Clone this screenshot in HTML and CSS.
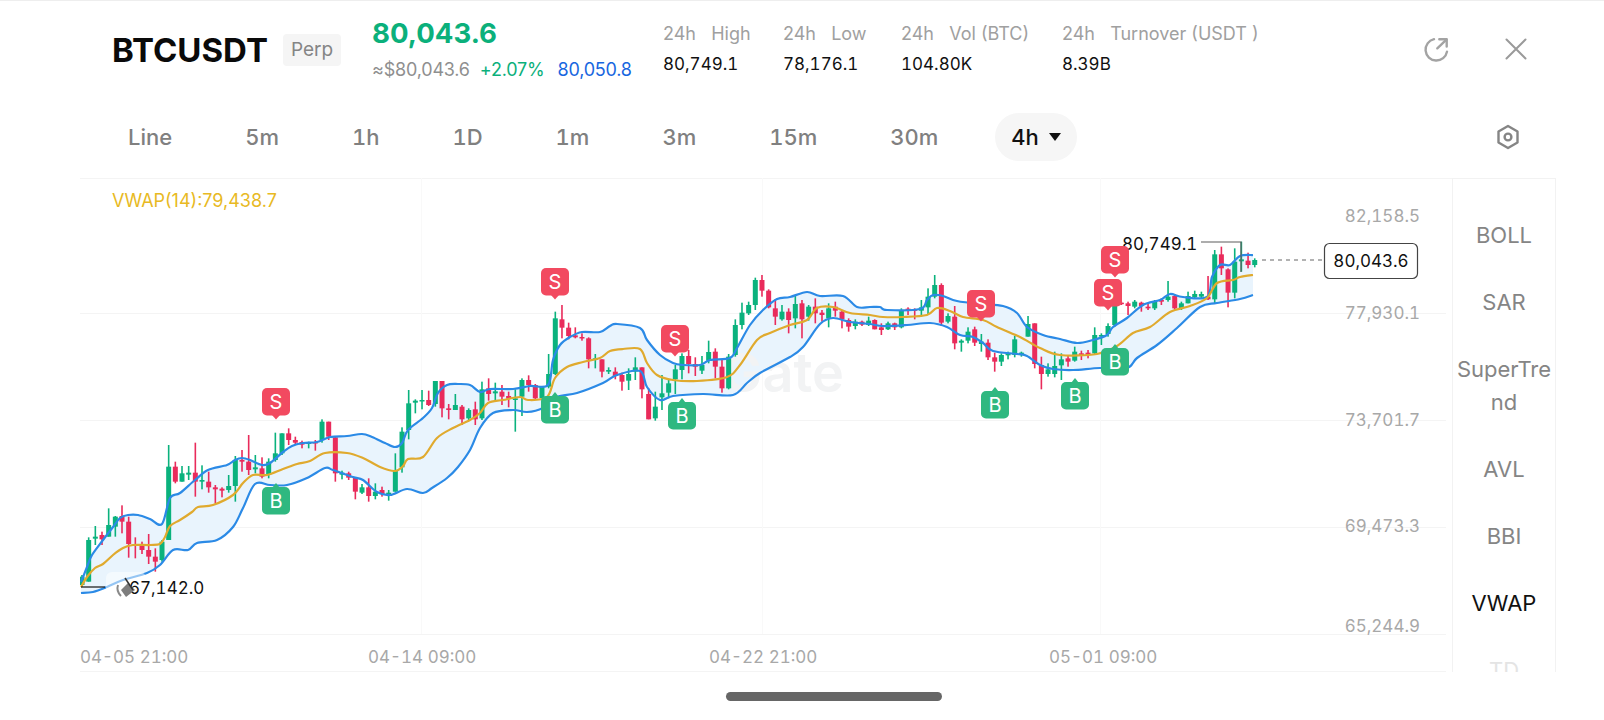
FILE: index.html
```html
<!DOCTYPE html>
<html lang="en">
<head>
    <meta charset="UTF-8">
    <meta name="viewport" content="width=device-width, initial-scale=1.0">
    <title>BTCUSDT</title>
    <link rel="stylesheet" href="styles.css">
</head>
<body>

    <header class="ticker">
        <div class="symbol">
            <h1>BTCUSDT</h1>
            <span class="tag">Perp</span>
        </div>
        <div class="price">
            <div class="price-main">80,043.6</div>
            <div class="price-sub">
                <span class="fiat">≈$80,043.6</span>
                <span class="change">+2.07%</span>
                <span class="mark">80,050.8</span>
            </div>
        </div>
        <div class="stats">
            <div class="stat stat-high">
                <div class="stat-label">24h&nbsp;&nbsp; High</div>
                <div class="stat-value">80,749.1</div>
            </div>
            <div class="stat stat-low">
                <div class="stat-label">24h&nbsp;&nbsp; Low</div>
                <div class="stat-value">78,176.1</div>
            </div>
            <div class="stat stat-vol">
                <div class="stat-label">24h&nbsp;&nbsp; Vol (BTC)</div>
                <div class="stat-value">104.80K</div>
            </div>
            <div class="stat">
                <div class="stat-label">24h&nbsp;&nbsp; Turnover (USDT )</div>
                <div class="stat-value">8.39B</div>
            </div>
        </div>
        <div class="actions">
            <svg class="icon" width="28" height="28" viewBox="0 0 28 28" fill="none" stroke="#a3a3a3" stroke-width="2.4" stroke-linecap="round" stroke-linejoin="round">
                <path d="M12 4.2A10.8 10.8 0 1 0 25 16.6"/>
                <path d="M17.3 4.3H24.7V11.6"/>
                <path d="M24.4 4.6L15.3 13.3"/>
            </svg>
            <svg class="icon" width="22" height="22" viewBox="0 0 22 22" fill="none" stroke="#9a9a9a" stroke-width="2" stroke-linecap="round">
                <path d="M1.5 1.5L20.5 20.5M20.5 1.5L1.5 20.5"/>
            </svg>
        </div>
    </header>

    <nav class="tabs">
        <a class="tab">Line</a>
        <a class="tab">5m</a>
        <a class="tab">1h</a>
        <a class="tab">1D</a>
        <a class="tab">1m</a>
        <a class="tab">3m</a>
        <a class="tab">15m</a>
        <a class="tab">30m</a>
        <a class="tab tab-active">4h <span class="caret"></span></a>
        <svg class="settings" width="24" height="28" viewBox="0 0 24 28" fill="none" stroke="#858585" stroke-width="2.4" stroke-linejoin="round">
            <path d="M12 3L21.5 8.5V19.5L12 25L2.5 19.5V8.5Z"/>
            <circle cx="12" cy="14" r="3.4"/>
        </svg>
    </nav>

    <section class="chart-wrap">
        <svg class="chart" id="chart" width="1372" height="494" viewBox="80 178 1372 494">
            <g class="grid">
                <path d="M80 178.5H1452M80 313.5H1446M80 420.5H1446M80 527.5H1446M80 634.5H1446M80 671.5H1446"/>
                <path class="grid-v" d="M421.5 178V634M762.5 178V634M1100.5 178V634"/>
            </g>

            <path id="band-fill" class="band-fill"/>
            <text class="watermark" x="722" y="392">Gate</text>
            <g id="candles"></g>
            <path id="band-upper" class="band-line"/>
            <path id="band-lower" class="band-line"/>
            <path id="band-mid" class="mid-line"/>

            <!-- low marker -->
            <rect x="106" y="572" width="40" height="36" rx="6" class="low-box"/>
            <path d="M81 587H105" class="low-line"/>
            <text class="px-label" x="129" y="594">67,142.0</text>
            <path d="M121 590L128 583L135 590L126 597Z" class="speaker"/>
            <path d="M118 585Q116 591 121 596" class="speaker-wave"/>
            <path d="M125 578L133 590" class="speaker-edge"/>

            <!-- high marker -->
            <path d="M1201 242H1241V272" class="high-line"/>
            <text class="px-label" x="1122" y="249.5">80,749.1</text>

            <!-- last price -->
            <path d="M1262 260H1324" class="last-line"/>
            <rect x="1324.5" y="243.5" width="93" height="35" rx="5" class="last-box"/>
            <text class="px-label last-text" x="1371" y="267">80,043.6</text>

            <g id="marks"></g>

            <text class="vwap-label" x="112" y="206.5">VWAP(14):79,438.7</text>

            <g class="price-axis">
                <text x="1420" y="222">82,158.5</text>
                <text x="1420" y="319">77,930.1</text>
                <text x="1420" y="426">73,701.7</text>
                <text x="1420" y="532">69,473.3</text>
                <text x="1420" y="632">65,244.9</text>
            </g>
            <g class="time-axis">
                <text x="80" y="663">04-05 21:00</text>
                <text x="368" y="663">04-14 09:00</text>
                <text x="709" y="663">04-22 21:00</text>
                <text x="1049" y="663">05-01 09:00</text>
            </g>
        </svg>

        <aside class="indicators">
            <div class="indicator">BOLL</div>
            <div class="indicator">SAR</div>
            <div class="indicator">SuperTrend</div>
            <div class="indicator">AVL</div>
            <div class="indicator">BBI</div>
            <div class="indicator indicator-active">VWAP</div>
            <div class="indicator indicator-faded">TD</div>
        </aside>
    </section>

    <div class="home-bar"></div>

    <script src="chart.js"></script>
</body>
</html>
```

FILE: styles.css
```css
* {
    box-sizing: border-box;
}

body {
    font-family: Inter, "Liberation Sans", sans-serif;
    background-color: #fff;
    margin: 0;
    width: 1604px;
    height: 720px;
    overflow: hidden;
    color: #111;
    border-top: 1px solid #eee;
}

.ticker {
    display: flex;
    height: 112px;
    padding: 12px 77px 0 112px;
}

.symbol {
    display: flex;
    align-items: center;
    gap: 15px;
    width: 260px;
    height: 74px;
}

.symbol h1 {
    margin: 0;
    font-size: 33px;
    font-weight: 700;
    color: #0a0a0a;
}

.tag {
    padding: 4px 8px;
    height: 32px;
    font-size: 19px;
    line-height: 24px;
    color: #858585;
    background-color: #f5f5f5;
    border-radius: 4px;
}

.price {
    width: 291px;
    padding-top: 1px;
}

.price-main {
    font-size: 27.6px;
    line-height: 38px;
    font-weight: 700;
    color: #0bb07b;
}

.price-sub {
    display: flex;
    gap: 10px;
    margin-top: 7px;
    font-size: 18px;
    line-height: 22px;
    letter-spacing: -0.2px;
}

.fiat {
    color: #8f8f8f;
}

.change {
    color: #0bb07b;
}

.mark {
    color: #1766e0;
    margin-left: 3px;
}

.stats {
    display: flex;
    flex: 1;
    padding-top: 10px;
}

.stat {
    margin-right: 20px;
}

.stat-high {
    width: 100px;
}

.stat-low {
    width: 98px;
}

.stat-vol {
    width: 141px;
}

.stat-label {
    font-size: 18px;
    line-height: 22px;
    color: #a0a0a0;
    white-space: nowrap;
}

.stat-value {
    margin-top: 8px;
    font-size: 17px;
    line-height: 22px;
    font-variant-numeric: tabular-nums;
    color: #111;
}

.actions {
    display: flex;
    align-items: center;
    gap: 55px;
    height: 72px;
}

.tabs {
    display: flex;
    align-items: center;
    gap: 73px;
    height: 48px;
    padding-left: 128px;
    padding-right: 84px;
}

.tab {
    font-size: 22px;
    font-weight: 500;
    font-variant-numeric: tabular-nums;
    color: #808080;
}

.tab-active {
    position: relative;
    display: flex;
    align-items: center;
    gap: 10px;
    height: 48px;
    margin-left: -16px;
    padding: 0 16px;
    color: #111;
    background-color: #f6f6f6;
    border-radius: 24px;
}

.caret {
    width: 0;
    height: 0;
    border-left: 6px solid transparent;
    border-right: 6px solid transparent;
    border-top: 8px solid #111;
}

.settings {
    margin-left: auto;
}

.chart-wrap {
    display: flex;
    height: 494px;
    margin-top: 17px;
    margin-left: 80px;
}

.chart {
    display: block;
    flex-shrink: 0;
}

.grid path {
    fill: none;
    stroke: #f4f4f4;
    stroke-width: 1;
}

.grid .grid-v {
    stroke: #f9f9f9;
}

.watermark {
    font-size: 54px;
    font-weight: 600;
    fill: #f2f3f4;
}

.band-fill {
    fill: #e9f4fd;
}

.band-line {
    fill: none;
    stroke: #2b8ae6;
    stroke-width: 2.2;
    stroke-linejoin: round;
}

.mid-line {
    fill: none;
    stroke: #e0aa2e;
    stroke-width: 2.2;
    stroke-linejoin: round;
}

.low-box {
    fill: rgba(255, 255, 255, 0.5);
}

.low-line {
    stroke: #111;
    stroke-width: 1.2;
}

.speaker {
    fill: #7d7d7d;
}

.speaker-wave {
    fill: none;
    stroke: #8a8a8a;
    stroke-width: 2;
}

.speaker-edge {
    stroke: #333;
    stroke-width: 1.5;
}

.high-line {
    fill: none;
    stroke: #5c5c5c;
    stroke-width: 1.2;
}

.last-line {
    stroke: #666;
    stroke-width: 1.2;
    stroke-dasharray: 4 4;
}

.last-box {
    fill: #fff;
    stroke: #444;
    stroke-width: 1.2;
}

.px-label {
    font-size: 17px;
    font-variant-numeric: tabular-nums;
    fill: #111;
}

.last-text {
    text-anchor: middle;
}

.vwap-label {
    font-size: 18px;
    fill: #e8b923;
}

.price-axis text {
    font-size: 17px;
    font-variant-numeric: tabular-nums;
    fill: #a8a8a8;
    text-anchor: end;
}

.time-axis text {
    font-size: 17px;
    font-variant-numeric: tabular-nums;
    fill: #a8a8a8;
}

.mark-sell {
    fill: #f24a60;
}

.mark-buy {
    fill: #2fb880;
}

.mark-text {
    font-size: 20px;
    fill: #fff;
    text-anchor: middle;
}

.indicators {
    width: 104px;
    height: 494px;
    overflow: hidden;
    border: 1px solid #f2f2f2;
    border-bottom: none;
    padding-top: 40px;
}

.indicator {
    padding: 0 2px;
    margin-bottom: 34px;
    font-size: 22px;
    line-height: 33px;
    text-align: center;
    word-break: break-all;
    color: #858585;
}

.indicator-active {
    color: #111;
}

.indicator-faded {
    color: #e4e4e4;
}

.home-bar {
    width: 216px;
    height: 9px;
    margin: 20px 0 0 726px;
    background-color: #666;
    border-radius: 5px;
}
```

FILE: chart.js
```js
const SVG_NS = 'http://www.w3.org/2000/svg';
const STEP = 6.667;
const g = 1;
const r = 0;

// [high, bodyTop, bodyBottom, low, colour], y in thirds of a px from the base
const candleRuns = [
    { x: 82, base: 380, rows: [
        [585,590,615,620,g],[472,480,605,605,g],[438,470,476,495,g],[455,465,478,495,r],
        [385,435,470,470,g],[408,410,440,470,g],[376,408,425,460,r],[410,425,492,533,r],
        [472,492,498,535,r],[485,497,510,522,r],[462,510,530,552,r],[505,530,545,575,r],
        [480,485,540,545,g],[195,260,480,480,g],[245,260,305,310,r],[258,280,305,305,g],
        [258,278,284,300,g],[188,278,305,350,r],[256,300,305,328,g],[275,305,322,338,r],
        [315,322,328,370,r],[322,326,332,352,r],[285,318,330,338,g],[228,240,318,365,g],
        [210,240,245,275,r],[165,245,270,285,r],[225,262,268,280,g],[232,265,290,295,r],
        [235,245,285,295,g],[158,220,240,245,g],[160,160,220,225,g],[145,160,180,195,r],
        [170,180,188,195,r],[182,186,194,205,r],[185,186,192,205,g],[180,186,190,212,r],
        [118,125,180,188,g],[125,125,170,180,r],[170,172,280,305,r],[272,278,284,298,g],
        [275,280,293,300,r],[293,293,335,358,r],[312,322,338,342,g],[295,322,348,365,r],
        [310,335,348,358,g],[320,330,342,350,r],[330,338,345,362,g],[220,270,335,335,g],
        [142,155,262,278,g],[30,70,150,178,g],[58,62,68,100,g],[30,60,64,88,g],
        [32,60,75,78,r],[3,3,72,80,g],[3,3,85,112,r],[72,85,90,118,r],
        [42,75,90,90,g],[75,80,118,135,r],[85,90,115,122,g]
    ] },
    { x: 475.3, base: 250, rows: [
        [455,478,508,525,r],[395,418,505,510,g],[385,415,432,452,r],[398,424,430,450,g],
        [405,425,440,465,r],[425,438,446,472,r],[418,445,450,545,g],[385,390,440,498,g],
        [376,390,405,425,r],[402,405,445,448,r],[410,410,445,448,g],[312,372,410,415,g],
        [185,205,372,375,g],[165,208,233,265,r],[218,233,258,268,r],[232,256,262,265,r],
        [250,261,265,272,r],[262,265,328,355,r],[312,325,330,355,g],[328,328,365,382,r],
        [352,360,365,372,g],[352,365,378,388,r],[368,375,395,422,r],[355,372,392,420,g],
        [322,352,365,390,g],[352,352,418,445,r],[415,432,508,508,r],[425,470,505,512,g],
        [375,430,442,480,g],[390,400,428,445,g],[345,358,388,432,g],[310,318,360,388,g],
        [300,318,342,370,r],[322,342,350,378,r],[318,345,362,372,g],[272,306,332,340,g],
        [295,305,350,385,r],[330,350,415,428,r],[312,320,415,418,g],[208,225,315,320,g],
        [158,188,225,238,g],[155,165,190,195,g],[83,90,165,180,g],[75,90,122,140,r],
        [118,122,172,175,r],[148,175,200,225,r],[165,185,208,212,g],[175,185,210,250,r],
        [135,162,205,235,g],[150,160,208,265,r],[165,170,200,212,g],[145,170,190,220,r],
        [180,188,195,215,r],[160,175,205,232,g],[155,170,182,200,r],[180,185,208,235,r],
        [205,210,230,245,r],[208,215,228,238,g],[212,215,224,228,r],[200,212,225,228,g]
    ] },
    { x: 874.7, base: 220, rows: [
        [298,300,328,328,r],[310,322,330,345,r],[305,310,328,330,g],[308,310,322,330,r],
        [265,270,322,325,g],[262,266,272,285,r],[265,268,272,298,r],[240,262,272,290,g],
        [205,230,262,285,g],[165,195,230,235,g],[190,195,308,318,r],[280,288,305,310,g],
        [258,290,370,388,r],[358,362,368,395,g],[322,335,362,370,g],[320,328,368,378,r],
        [342,365,372,395,g],[358,368,412,420,r],[398,412,425,455,r],[400,405,425,438,g],
        [395,400,406,418,g],[348,358,405,412,g],[395,398,404,410,g],[288,312,350,350,g],
        [310,310,432,445,r],[410,435,462,508,r],[430,448,462,470,g],[395,438,462,472,g],
        [400,418,436,480,g],[405,415,425,440,r],[380,395,422,425,g],[392,400,408,420,r],
        [390,398,405,415,r],[322,345,400,405,g],[340,345,350,375,g],[310,318,342,350,g],
        [180,235,315,320,g],[245,248,252,255,r],[245,250,258,285,r],[240,245,260,265,g],
        [245,248,258,275,r],[250,260,265,270,r],[240,245,265,270,g],[235,240,245,255,r],
        [183,230,240,245,g],[222,228,265,270,r],[245,250,265,270,g],[215,228,250,250,g],
        [212,222,232,235,g],[215,222,230,235,g],[168,230,238,240,r],[90,103,238,250,g],
        [80,103,145,165,r],[145,148,218,262,r],[85,125,218,235,g],[65,118,124,155,g],
        [98,122,135,145,r],[115,120,135,142,g]
    ] }
];

const upper = [[81,582],[87,567],[92,555],[103,540],[113,527],[120,518],[128,515],[138,515],[150,519],[162,524],
    [170,498],[180,493],[195,480],[208,470],[227,465],[235,460],[242,458],[250,460],[262,465],[270,463],
    [283,452],[292,446],[303,443],[317,442],[330,437],[347,436],[362,434],[372,437],[385,443],[395,447],
    [402,443],[408,430],[423,418],[432,408],[438,393],[447,385],[458,384],[470,385],[480,392],[490,389],
    [513,389],[530,386],[548,385],[553,360],[560,345],[570,337],[582,332],[600,332],[610,326],[617,324],
    [640,328],[647,340],[660,355],[673,363],[683,365],[700,365],[710,360],[730,358],[737,348],[750,325],
    [763,310],[777,299],[790,297],[807,292],[820,296],[843,296],[857,307],[870,307],[880,307],[887,310],
    [920,309],[927,300],[933,295],[943,296],[957,301],[980,304],[1003,306],[1017,313],[1027,327],[1043,335],
    [1060,339],[1077,343],[1093,340],[1107,335],[1113,327],[1127,318],[1143,305],[1160,300],[1170,294],[1183,297],
    [1207,297],[1212,277],[1220,265],[1230,265],[1240,256],[1253,255]];

const mid = [[81,587],[87,577],[95,568],[103,564],[113,555],[123,548],[133,545],[150,545],[160,544],[165,537],
    [170,526],[180,520],[192,512],[198,507],[213,505],[233,495],[243,483],[253,475],[267,475],[283,469],
    [297,464],[310,461],[325,453],[347,453],[363,458],[380,467],[395,471],[403,466],[408,459],[423,457],
    [437,438],[453,428],[470,420],[480,413],[488,403],[503,400],[520,397],[528,400],[547,397],[555,378],
    [567,367],[583,362],[600,358],[610,351],[623,349],[640,349],[647,363],[657,375],[673,380],[697,381],
    [727,377],[740,365],[757,340],[770,333],[790,325],[807,320],[817,308],[833,307],[850,313],[870,315],
    [883,317],[903,317],[927,315],[937,308],[950,311],[963,317],[983,320],[997,327],[1020,337],[1040,348],
    [1060,355],[1097,354],[1117,346],[1133,333],[1150,327],[1170,312],[1190,306],[1207,298],[1217,283],[1233,280],
    [1240,277],[1253,275]];

const lower = [[81,593],[93,592],[107,587],[123,580],[147,573],[160,565],[173,550],[188,550],[197,543],[217,540],
    [233,527],[243,508],[255,484],[270,485],[287,485],[307,478],[325,468],[333,470],[353,477],[363,480],
    [377,492],[390,495],[407,489],[423,493],[432,488],[447,478],[458,467],[470,450],[480,428],[493,413],
    [513,410],[527,412],[543,408],[557,397],[577,393],[603,383],[617,375],[640,371],[647,387],[660,400],
    [673,396],[703,394],[733,395],[747,383],[760,373],[790,357],[803,347],[820,324],[833,318],[850,322],
    [870,324],[883,326],[907,325],[930,323],[947,327],[960,335],[973,337],[983,343],[993,351],[1017,354],
    [1027,356],[1040,365],[1053,369],[1073,370],[1100,368],[1127,368],[1137,358],[1157,345],[1177,328],[1200,307],
    [1217,303],[1240,299],[1253,295]];

// buy/sell badges: left, top of the 28px square
const marks = [
    ['S',262,388],['B',262,487],['S',541,268],['B',541,396],['S',661,325],['B',668,402],
    ['S',967,290],['B',981,391],['B',1061,382],['B',1101,348],['S',1101,246],['S',1094,279]
];

function el(name, attrs, parent) {
    const node = document.createElementNS(SVG_NS, name);
    for (const key in attrs) {
        node.setAttribute(key, attrs[key]);
    }
    parent.appendChild(node);
    return node;
}

// smooth a list of points with a catmull-rom curve
function curve(points) {
    let d = '';
    for (let i = 0; i < points.length - 1; i++) {
        const p0 = points[Math.max(i - 1, 0)];
        const p1 = points[i];
        const p2 = points[i + 1];
        const p3 = points[Math.min(i + 2, points.length - 1)];
        const c1x = p1[0] + (p2[0] - p0[0]) / 6;
        const c1y = p1[1] + (p2[1] - p0[1]) / 6;
        const c2x = p2[0] - (p3[0] - p1[0]) / 6;
        const c2y = p2[1] - (p3[1] - p1[1]) / 6;
        d += `C${c1x.toFixed(1)} ${c1y.toFixed(1)} ${c2x.toFixed(1)} ${c2y.toFixed(1)} ${p2[0]} ${p2[1]}`;
    }
    return d;
}

function drawCandles() {
    const group = document.getElementById('candles');
    for (const run of candleRuns) {
        run.rows.forEach((row, i) => {
            const x = run.x + i * STEP;
            const y = v => run.base + v / 3;
            const colour = row[4] === g ? '#0ab27d' : '#e92b5b';
            el('rect', { x: x - 0.8, y: y(row[0]), width: 1.6, height: (row[3] - row[0]) / 3, fill: colour }, group);
            el('rect', { x: x - 2.5, y: y(row[1]), width: 5, height: Math.max((row[2] - row[1]) / 3, 1.5), fill: colour }, group);
        });
    }
}

function drawBands() {
    const start = p => `M${p[0]} ${p[1]}`;
    const lowerBack = lower.slice().reverse();
    document.getElementById('band-fill').setAttribute('d',
        start(upper[0]) + curve(upper) + 'L' + lowerBack[0].join(' ') + curve(lowerBack) + 'Z');
    document.getElementById('band-upper').setAttribute('d', start(upper[0]) + curve(upper));
    document.getElementById('band-lower').setAttribute('d', start(lower[0]) + curve(lower));
    document.getElementById('band-mid').setAttribute('d', start(mid[0]) + curve(mid));
}

function drawMarks() {
    const group = document.getElementById('marks');
    for (const [label, x, y] of marks) {
        const sell = label === 'S';
        const tipY = sell ? y + 31.5 : y - 4;
        const baseY = sell ? y + 27 : y + 1;
        el('rect', { x: x, y: y, width: 28, height: 27.5, rx: 5, class: sell ? 'mark-sell' : 'mark-buy' }, group);
        el('path', {
            d: `M${x + 10} ${baseY}L${x + 14} ${tipY}L${x + 18} ${baseY}Z`,
            class: sell ? 'mark-sell' : 'mark-buy'
        }, group);
        const text = el('text', { x: x + 14, y: y + 21, class: 'mark-text' }, group);
        text.textContent = label;
    }
}

drawCandles();
drawBands();
drawMarks();
```
